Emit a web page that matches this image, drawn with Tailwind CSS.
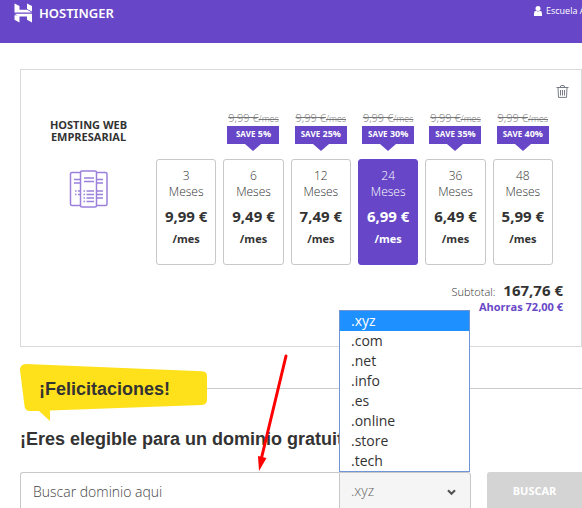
<!DOCTYPE html>
<html lang="es">
<head>
<meta charset="utf-8">
<meta name="viewport" content="width=device-width, initial-scale=1">
<title>Hostinger</title>
<script src="https://cdn.jsdelivr.net/npm/@tailwindcss/browser@4"></script>
</head>
<body class="overflow-x-hidden bg-white font-['Open_Sans',sans-serif] text-[#333]">
<header class="flex h-[43px] items-start bg-[#6747c7] pl-[14px] text-white">
  <a href="#" class="flex items-center gap-[6px] pt-[3px]">
    <svg class="h-5 w-[19px]" viewBox="0 0 19 20" fill="#fff" aria-hidden="true">
      <path d="M0.500 0.500L5.500 3v3.700H13L18 9.400H0.500z"/>
      <path d="M13 0.500L18 3v5.400L13 6z"/>
      <path d="M0.500 12.300H5.500V19.500L0.500 16.800z"/>
      <path d="M0.500 10.800H18v8.700L13 16.800V13.500H5.500z"/>
    </svg>
    <span class="font-['Noto_Sans',sans-serif] text-[13px] font-semibold leading-5">HOSTINGER</span>
  </a>
  <a href="#" class="ml-auto flex w-12 items-center gap-[4px] overflow-hidden pt-1 text-[9px] font-medium leading-[14px] whitespace-nowrap">
    <svg class="h-[10px] w-2 shrink-0" viewBox="0 0 8 10" fill="#fff" aria-hidden="true"><circle cx="4" cy="2.600" r="2.500"/><path d="M0 10V7.500Q0 5 2 4.700Q4 6.200 6 4.700Q8 5 8 7.500V10z"/></svg>
    <span>Escuela A</span>
  </a>
</header>

<main class="pl-5 pt-[26px]">
  <section class="relative flex h-[278px] border border-[#d9d9d9]">
    <button type="button" aria-label="Eliminar" class="absolute top-[15px] right-3">
      <svg class="h-[13px] w-[13px]" viewBox="0 0 13 13" fill="none" stroke="#777c86" aria-hidden="true"><path d="M0.500 2.500H12.500M4 2.500L5 0.600H8L9 2.500M2 2.500L2.500 12.400H10.500L11 2.500M4.500 5V10.500M6.500 5V10.500M8.500 5V10.500"/></svg>
    </button>
    <div class="flex w-[135px] shrink-0 flex-col items-center pt-[49px]">
      <h2 class="text-center text-[11px] font-bold leading-3">HOSTING WEB<br>EMPRESARIAL</h2>
      <svg class="mt-[27px] h-[38px] w-10" viewBox="0 0 40 38" fill="none" stroke="#9a80dc" stroke-width="1.500" aria-hidden="true">
        <path d="M11 2.500H3Q1.500 2.500 1.500 4V34Q1.500 35.500 3 35.500H11M28 2.500H36.500Q38 2.500 38 4V34Q38 35.500 36.500 35.500H28"/>
        <rect x="11.500" y="1" width="16" height="36" rx="1.500"/>
        <path d="M15 8H25M15 11.500H25M5 9.500H11M5 13H11M28 9.500H34M28 13H34M28 21H34M28 24.500H34M28 28H34M17.500 21H25M17.500 24.500H25M17.500 28H25M17.500 31.500H25M14.500 21H16M14.500 24.500H16M14.500 28H16M14.500 31.500H16M6 21H7.500M6 24.500H7.500M9 21H11M9 24.500H11"/>
      </svg>
    </div>
    <div class="flex grow flex-col pr-7 pt-10">
      <div class="grid grid-cols-6 items-end gap-[7px] text-center">
        <div class="flex flex-col items-center">
          <button type="button" class="h-[106px] w-full rounded-[3px] border border-[#c8c8c8] pb-[7px]"><span class="block text-xs font-light leading-4">3<br>Meses</span><span class="mt-[6px] block text-[15px] font-bold leading-5">9,99 €</span><span class="mt-[3px] block text-[11px] font-bold leading-5">/mes</span></button>
        </div>
        <div class="flex flex-col items-center">
          <s class="h-4 text-[11px] font-light leading-4 whitespace-nowrap text-[#777]">9,99 €<small class="text-[9px]">/mes</small></s>
          <span class="h-[18px] w-[52px] bg-[#6747c7] text-[9px] font-bold leading-4 whitespace-nowrap text-white"><span class="text-[8px]">SAVE</span> 5%</span>
          <span class="mb-2 border-x-8 border-t-[7px] border-x-transparent border-t-[#6747c7]"></span>
          <button type="button" class="h-[106px] w-full rounded-[3px] border border-[#c8c8c8] pb-[7px]"><span class="block text-xs font-light leading-4">6<br>Meses</span><span class="mt-[6px] block text-[15px] font-bold leading-5">9,49 €</span><span class="mt-[3px] block text-[11px] font-bold leading-5">/mes</span></button>
        </div>
        <div class="flex flex-col items-center">
          <s class="h-4 text-[11px] font-light leading-4 whitespace-nowrap text-[#777]">9,99 €<small class="text-[9px]">/mes</small></s>
          <span class="h-[18px] w-[52px] bg-[#6747c7] text-[9px] font-bold leading-4 whitespace-nowrap text-white"><span class="text-[8px]">SAVE</span> 25%</span>
          <span class="mb-2 border-x-8 border-t-[7px] border-x-transparent border-t-[#6747c7]"></span>
          <button type="button" class="h-[106px] w-full rounded-[3px] border border-[#c8c8c8] pb-[7px]"><span class="block text-xs font-light leading-4">12<br>Meses</span><span class="mt-[6px] block text-[15px] font-bold leading-5">7,49 €</span><span class="mt-[3px] block text-[11px] font-bold leading-5">/mes</span></button>
        </div>
        <div class="flex flex-col items-center">
          <s class="h-4 text-[11px] font-light leading-4 whitespace-nowrap text-[#777]">9,99 €<small class="text-[9px]">/mes</small></s>
          <span class="h-[18px] w-[52px] bg-[#6747c7] text-[9px] font-bold leading-4 whitespace-nowrap text-white"><span class="text-[8px]">SAVE</span> 30%</span>
          <span class="mb-2 border-x-8 border-t-[7px] border-x-transparent border-t-[#6747c7]"></span>
          <button type="button" aria-pressed="true" class="h-[106px] w-full rounded-[3px] border border-[#6747c7] bg-[#6747c7] pb-[7px] text-white"><span class="block text-xs font-light leading-4">24<br>Meses</span><span class="mt-[6px] block text-[15px] font-bold leading-5">6,99 €</span><span class="mt-[3px] block text-[11px] font-bold leading-5">/mes</span></button>
        </div>
        <div class="flex flex-col items-center">
          <s class="h-4 text-[11px] font-light leading-4 whitespace-nowrap text-[#777]">9,99 €<small class="text-[9px]">/mes</small></s>
          <span class="h-[18px] w-[52px] bg-[#6747c7] text-[9px] font-bold leading-4 whitespace-nowrap text-white"><span class="text-[8px]">SAVE</span> 35%</span>
          <span class="mb-2 border-x-8 border-t-[7px] border-x-transparent border-t-[#6747c7]"></span>
          <button type="button" class="h-[106px] w-full rounded-[3px] border border-[#c8c8c8] pb-[7px]"><span class="block text-xs font-light leading-4">36<br>Meses</span><span class="mt-[6px] block text-[15px] font-bold leading-5">6,49 €</span><span class="mt-[3px] block text-[11px] font-bold leading-5">/mes</span></button>
        </div>
        <div class="flex flex-col items-center">
          <s class="h-4 text-[11px] font-light leading-4 whitespace-nowrap text-[#777]">9,99 €<small class="text-[9px]">/mes</small></s>
          <span class="h-[18px] w-[52px] bg-[#6747c7] text-[9px] font-bold leading-4 whitespace-nowrap text-white"><span class="text-[8px]">SAVE</span> 40%</span>
          <span class="mb-2 border-x-8 border-t-[7px] border-x-transparent border-t-[#6747c7]"></span>
          <button type="button" class="h-[106px] w-full rounded-[3px] border border-[#c8c8c8] pb-[7px]"><span class="block text-xs font-light leading-4">48<br>Meses</span><span class="mt-[6px] block text-[15px] font-bold leading-5">5,99 €</span><span class="mt-[3px] block text-[11px] font-bold leading-5">/mes</span></button>
        </div>
      </div>
      <div class="mt-[15px] -mr-[10px] text-right">
        <p class="flex h-5 items-baseline justify-end gap-2 leading-5"><span class="text-[11px] font-light">Subtotal:</span><span class="text-[15px] font-bold">167,76 €</span></p>
        <p class="text-[11px] font-bold leading-[14px] text-[#6747c7]">Ahorras 72,00 €</p>
      </div>
    </div>
  </section>

  <section class="font-['Liberation_Sans',sans-serif]">
    <div class="mt-[17px] flex h-[58px] items-start">
      <div class="relative h-[58px] w-[187px] shrink-0">
        <svg class="absolute inset-0 h-full w-full" viewBox="0 0 187 58" aria-hidden="true"><path d="M6 0L182 7.200Q187 7.500 187 12V36Q187 40.500 182 41L30 46.500V57L19 47H10Q5 47 4.500 42L0 6Q0 0 6 0z" fill="#ffe11b"/></svg>
        <h3 class="relative pl-[19px] text-lg font-bold leading-[50px]">¡Felicitaciones!</h3>
      </div>
      <div class="mt-6 h-px grow bg-[#ccc]"></div>
    </div>
    <h3 class="mt-1 text-lg font-bold leading-[26px] whitespace-nowrap">¡Eres elegible para un dominio gratuito!</h3>
  </section>

  <form class="mt-5 flex h-9">
    <input type="text" aria-label="Buscar dominio" placeholder="Buscar dominio aqui" class="h-[38px] w-0 grow rounded-l-[3px] border border-r-0 border-[#c8c8c8] px-3 text-sm font-light outline-none placeholder:text-[#444]">
    <div class="relative w-[132px]">
      <select aria-label="Extensión" class="h-[38px] w-full appearance-none rounded-r-[3px] border border-[#c8c8c8] bg-[#f5f5f5] pl-[11px] text-sm font-light text-[#666] outline-none">
        <option>.xyz</option><option>.com</option><option>.net</option><option>.info</option><option>.es</option><option>.online</option><option>.store</option><option>.tech</option>
      </select>
      <svg class="pointer-events-none absolute top-[17px] right-[15px] h-[7px] w-[9px]" viewBox="0 0 9 7" fill="none" stroke="#555" stroke-width="2.200" aria-hidden="true"><path d="M1 1.200L4.500 4.700L8 1.200"/></svg>
      <ul role="listbox" aria-label="Extensiones" class="absolute bottom-full left-0 w-[131px] border border-[#6f95d6] bg-white text-sm leading-5 [&>li]:pl-[11px]">
        <li role="option" aria-selected="true" class="bg-[#1e90ff] text-white">.xyz</li>
        <li role="option">.com</li>
        <li role="option">.net</li>
        <li role="option">.info</li>
        <li role="option">.es</li>
        <li role="option">.online</li>
        <li role="option">.store</li>
        <li role="option">.tech</li>
      </ul>
    </div>
    <button type="submit" class="ml-4 h-[38px] w-[95px] rounded-l-[3px] bg-[#d4d4d4] text-[11px] font-bold text-white">BUSCAR</button>
  </form>
</main>
<svg class="pointer-events-none absolute top-[354px] left-[256px] h-[118px] w-8" viewBox="0 0 32 118" aria-hidden="true"><path d="M30 2L5 106" stroke="#f00" stroke-width="3" stroke-linecap="round"/><path d="M2 102L10.500 104L3 117z" fill="#f00"/></svg>
</body>
</html>
